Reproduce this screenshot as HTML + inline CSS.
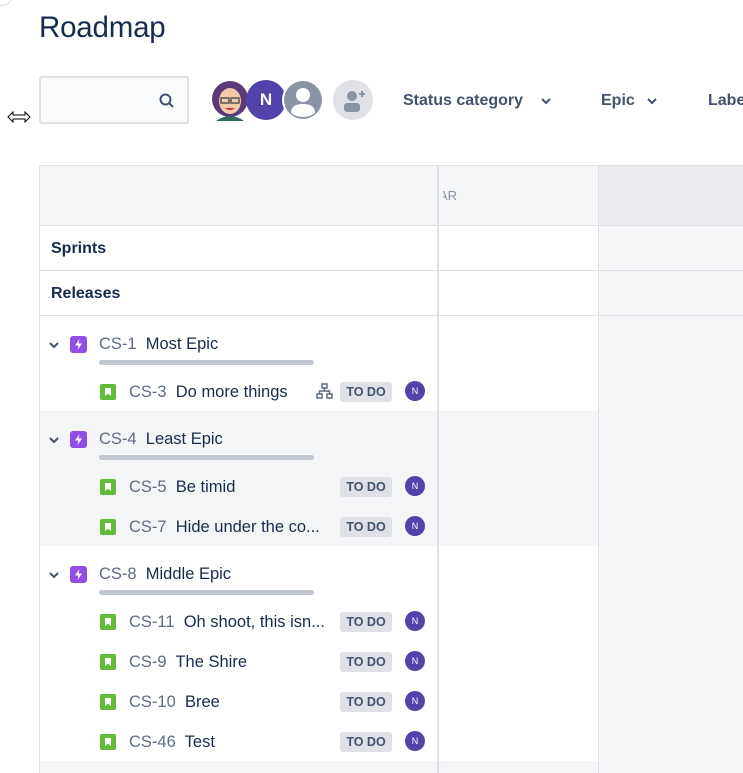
<!DOCTYPE html>
<html><head><meta charset="utf-8"><style>
*{margin:0;padding:0;box-sizing:border-box}
body{width:743px;height:773px;overflow:hidden;background:#fff;font-family:"Liberation Sans",sans-serif;color:#172b4d;position:relative}
.a{position:absolute}
h1{position:absolute;left:39px;top:11px;font-size:29.5px;font-weight:400;color:#172b4d;letter-spacing:-0.2px}
.search{left:39px;top:76px;width:150px;height:48px;border:2px solid #dfe1e6;border-radius:3px;background:#fafbfc}
.filter{top:92px;font-size:16px;color:#42526e;font-weight:bold}
.hl{background:#dfe1e6;height:1px}
.vl{background:#dfe1e6;width:1px}
.key{color:#5e6c84}
.row{position:absolute;font-size:16.5px;white-space:nowrap}
.epic{width:17px;height:17px;border-radius:3px;background:#904ee2}
.story{width:16px;height:16px;border-radius:2px;background:#63ba3c}
.story:after{content:"";position:absolute;left:5px;top:4px;width:6px;height:8px;background:#fff;clip-path:polygon(0 0,100% 0,100% 100%,50% 70%,0 100%)}
.bar{height:5px;border-radius:3px;background:#c1c7d0;width:215px;left:99px}
.todo{width:52px;height:20px;left:340px;background:#dfe1e6;border-radius:3px;font-size:12.5px;font-weight:bold;color:#42526e;text-align:center;line-height:20px}
.av{width:20px;height:20px;left:405px;border-radius:50%;background:#5243aa;color:#fff;font-size:9px;text-align:center;line-height:20px}
</style></head><body>
<div class="a" style="left:-8px;top:-14px;width:20px;height:20px;border:1px solid #ddd;border-radius:50%"></div>
<h1>Roadmap</h1>
<div class="a search"><svg class="a" style="left:117px;top:14px" width="18" height="18" viewBox="0 0 18 18"><circle cx="7.5" cy="7.5" r="5" fill="none" stroke="#42526e" stroke-width="2"/><path d="M11 11l4 4" stroke="#42526e" stroke-width="2"/></svg></div>
<svg class="a" style="left:7px;top:111px" width="24" height="12" viewBox="0 0 24 12"><path d="M1 6l5-5v3h12V1l5 5-5 5V8H6v3z" fill="#fff" stroke="#000" stroke-width="1"/></svg>
<svg class="a" style="left:208px;top:79px" width="44" height="42" viewBox="0 0 44 42"><ellipse cx="22" cy="20" rx="18" ry="18" fill="#5b3a7a"/><ellipse cx="22" cy="22" rx="11" ry="13" fill="#f4c9a8"/><rect x="13" y="19" width="8" height="5" fill="none" stroke="#555" stroke-width="1.5"/><rect x="23" y="19" width="8" height="5" fill="none" stroke="#555" stroke-width="1.5"/><path d="M17 29q5 4 10 0" fill="#c33"/><path d="M8 42q14-10 28 0z" fill="#2f6b5a"/></svg>
<div class="a" style="left:246px;top:80px;width:40px;height:40px;border-radius:50%;background:#5243aa;color:#fff;font-size:17px;font-weight:bold;text-align:center;line-height:40px">N</div>
<svg class="a" style="left:282px;top:79px" width="42" height="42" viewBox="0 0 42 42"><circle cx="21" cy="21" r="21" fill="#fff"/><circle cx="21" cy="21" r="19" fill="#8993a4"/><circle cx="21" cy="16" r="7" fill="#fff"/><path d="M9 34q0-9 12-9t12 9q-5 4-12 4t-12-4z" fill="#fff"/></svg>
<svg class="a" style="left:333px;top:80px" width="40" height="40" viewBox="0 0 40 40"><circle cx="20" cy="20" r="20" fill="#dfe1e6"/><circle cx="19" cy="16" r="5" fill="#8993a4"/><rect x="11" y="23" width="16" height="9" rx="3" fill="#8993a4"/><path d="M26 14h6M29 11v6" stroke="#8993a4" stroke-width="2"/></svg>
<div class="a filter" style="left:403px">Status category</div>
<svg class="a" style="left:540px;top:97px" width="12" height="8"><path d="M2 2l4 4 4-4" stroke="#42526e" stroke-width="2" fill="none"/></svg>
<div class="a filter" style="left:601px">Epic</div>
<svg class="a" style="left:646px;top:97px" width="12" height="8"><path d="M2 2l4 4 4-4" stroke="#42526e" stroke-width="2" fill="none"/></svg>
<div class="a filter" style="left:708px">Labels</div>

<div class="a" style="left:39px;top:165px;width:704px;height:61px;background:#f4f5f7"></div>
<div class="a" style="left:599px;top:165px;width:144px;height:61px;background:#ebecf0"></div>
<div class="a" style="left:599px;top:226px;width:144px;height:190px;background:#f4f5f7"></div>
<div class="a" style="left:39px;top:411px;width:704px;height:135px;background:#f4f5f7"></div>
<div class="a" style="left:599px;top:546px;width:144px;height:215px;background:#f4f5f7"></div>
<div class="a" style="left:39px;top:761px;width:704px;height:12px;background:#f4f5f7"></div>
<div class="a hl" style="left:39px;top:165px;width:704px"></div>
<div class="a hl" style="left:39px;top:225px;width:704px"></div>
<div class="a hl" style="left:39px;top:270px;width:704px"></div>
<div class="a hl" style="left:39px;top:315px;width:704px"></div>
<div class="a vl" style="left:39px;top:165px;height:608px"></div>
<div class="a" style="left:437px;top:165px;width:2px;height:608px;background:#dfe1e6"></div>
<div class="a vl" style="left:598px;top:165px;height:608px"></div>
<div class="a" style="left:439px;top:188px;font-size:13px;color:#8993a4">AR</div>
<div class="a" style="left:437px;top:185px;width:6px;height:20px;background:#f4f5f7"></div>
<div class="a" style="left:437px;top:165px;width:2px;height:60px;background:#dfe1e6"></div>

<div class="row" style="left:51px;top:240px;font-weight:bold;font-size:16px">Sprints</div>
<div class="row" style="left:51px;top:285px;font-weight:bold;font-size:16px">Releases</div>

<svg class="a" style="left:48px;top:340px" width="12" height="10"><path d="M2 3l4 4 4-4" stroke="#42526e" stroke-width="2" fill="none"/></svg>
<svg class="a" style="left:70px;top:336px" width="17" height="17"><rect width="17" height="17" rx="3" fill="#904ee2"/><path d="M9.5 3L5 9.5h3.5L7.5 14 12 7.5H8.5z" fill="#fff"/></svg>
<div class="row" style="left:99px;top:335px"><span class="key">CS-1</span>&nbsp; Most Epic</div>
<div class="a bar" style="top:360px"></div>
<div class="a story" style="left:100px;top:384px"></div>
<div class="row" style="left:129px;top:383px"><span class="key">CS-3</span>&nbsp; Do more things</div>
<svg class="a" style="left:316px;top:383px" width="18" height="16"><g fill="none" stroke="#5e6c84" stroke-width="1.5"><rect x="6" y="1" width="5" height="4"/><rect x="1" y="11" width="5" height="4"/><rect x="11" y="11" width="5" height="4"/><path d="M8.5 5v3M3.5 11V8h10v3"/></g></svg>
<div class="a todo" style="top:382px">TO DO</div><div class="a av" style="top:381px">N</div>

<svg class="a" style="left:48px;top:435px" width="12" height="10"><path d="M2 3l4 4 4-4" stroke="#42526e" stroke-width="2" fill="none"/></svg>
<svg class="a" style="left:70px;top:431px" width="17" height="17"><rect width="17" height="17" rx="3" fill="#904ee2"/><path d="M9.5 3L5 9.5h3.5L7.5 14 12 7.5H8.5z" fill="#fff"/></svg>
<div class="row" style="left:99px;top:430px"><span class="key">CS-4</span>&nbsp; Least Epic</div>
<div class="a bar" style="top:455px"></div>
<div class="a story" style="left:100px;top:479px"></div>
<div class="row" style="left:129px;top:478px"><span class="key">CS-5</span>&nbsp; Be timid</div>
<div class="a todo" style="top:477px">TO DO</div><div class="a av" style="top:476px">N</div>
<div class="a story" style="left:100px;top:519px"></div>
<div class="row" style="left:129px;top:518px"><span class="key">CS-7</span>&nbsp; Hide under the co...</div>
<div class="a todo" style="top:517px">TO DO</div><div class="a av" style="top:516px">N</div>

<svg class="a" style="left:48px;top:570px" width="12" height="10"><path d="M2 3l4 4 4-4" stroke="#42526e" stroke-width="2" fill="none"/></svg>
<svg class="a" style="left:70px;top:566px" width="17" height="17"><rect width="17" height="17" rx="3" fill="#904ee2"/><path d="M9.5 3L5 9.5h3.5L7.5 14 12 7.5H8.5z" fill="#fff"/></svg>
<div class="row" style="left:99px;top:565px"><span class="key">CS-8</span>&nbsp; Middle Epic</div>
<div class="a bar" style="top:590px"></div>
<div class="a story" style="left:100px;top:614px"></div>
<div class="row" style="left:129px;top:613px"><span class="key">CS-11</span>&nbsp; Oh shoot, this isn...</div>
<div class="a todo" style="top:612px">TO DO</div><div class="a av" style="top:611px">N</div>
<div class="a story" style="left:100px;top:654px"></div>
<div class="row" style="left:129px;top:653px"><span class="key">CS-9</span>&nbsp; The Shire</div>
<div class="a todo" style="top:652px">TO DO</div><div class="a av" style="top:651px">N</div>
<div class="a story" style="left:100px;top:694px"></div>
<div class="row" style="left:129px;top:693px"><span class="key">CS-10</span>&nbsp; Bree</div>
<div class="a todo" style="top:692px">TO DO</div><div class="a av" style="top:691px">N</div>
<div class="a story" style="left:100px;top:734px"></div>
<div class="row" style="left:129px;top:733px"><span class="key">CS-46</span>&nbsp; Test</div>
<div class="a todo" style="top:732px">TO DO</div><div class="a av" style="top:731px">N</div>
</body></html>
